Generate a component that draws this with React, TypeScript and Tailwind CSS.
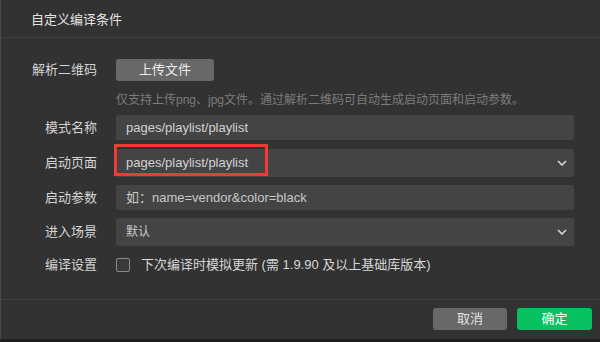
import React from "react";

const font = { fontFamily: '"Liberation Sans", "Noto Sans CJK SC", sans-serif' };

function Chevron() {
  return (
    <svg width="10" height="6" viewBox="0 0 10 6" className="shrink-0">
      <path d="M1 1 L5 5 L9 1" fill="none" stroke="#d8d8d8" strokeWidth="1.6" />
    </svg>
  );
}

function Label({ children }: { children: React.ReactNode }) {
  return <div className="w-[96px] shrink-0 text-right text-[13px] text-[#d4d4d4]">{children}</div>;
}

export default function App() {
  return (
    <div className="w-[600px] h-[342px] bg-[#1f1f1f] overflow-hidden" style={font}>
      <div className="relative w-[600px] h-[339px] bg-[#323232] border-l border-[#4a4a4a] flex flex-col">
        <div className="h-[38px] flex items-center pl-[30px] pt-[2px] text-[13px] text-[#e2e2e2] border-b border-[#3e3e3e]">
          自定义编译条件
        </div>
        <div className="flex-1 flex flex-col pr-[26px]">
          <div className="flex items-center mt-[21px] h-[22px]">
            <Label>解析二维码</Label>
            <button className="ml-[19px] w-[98px] h-[22px] rounded-[3px] bg-[#686868] text-[13px] text-[#ececec]">上传文件</button>
          </div>
          <div className="ml-[115px] mt-[12px] text-[12px] text-[#7c7c7c] leading-[14px]">
            仅支持上传png、jpg文件。通过解析二维码可自动生成启动页面和启动参数。
          </div>
          <div className="flex items-center mt-[8px]">
            <Label>模式名称</Label>
            <div className="ml-[19px] flex-1 h-[25px] rounded-[3px] bg-[#444444] flex items-center px-[10px] text-[13px] text-[#d2d2d2]">
              pages/playlist/playlist
            </div>
          </div>
          <div className="flex items-center mt-[9px]">
            <Label>启动页面</Label>
            <div className="ml-[19px] flex-1 h-[28px] rounded-[3px] bg-[#444444] flex items-center justify-between pl-[10px] pr-[7px] text-[13px] text-[#d2d2d2]">
              <span>pages/playlist/playlist</span>
              <Chevron />
            </div>
          </div>
          <div className="flex items-center mt-[8px]">
            <Label>启动参数</Label>
            <div className="ml-[19px] flex-1 h-[25px] rounded-[3px] bg-[#444444] flex items-center px-[10px] text-[13px] text-[#c8c8c8]">
              如：name=vendor&amp;color=black
            </div>
          </div>
          <div className="flex items-center mt-[8px]">
            <Label>进入场景</Label>
            <div className="ml-[19px] flex-1 h-[28px] rounded-[3px] bg-[#444444] flex items-center justify-between pl-[10px] pr-[7px] text-[12px] text-[#c8c8c8]">
              <span>默认</span>
              <Chevron />
            </div>
          </div>
          <div className="flex items-center mt-[9px]">
            <Label>编译设置</Label>
            <div className="ml-[19px] w-[14px] h-[14px] rounded-[2px] border border-[#8a8a8a] bg-[#3a3a3a]" />
            <div className="ml-[11px] text-[13px] text-[#d6d6d6]">下次编译时模拟更新 (需 1.9.90 及以上基础库版本)</div>
          </div>
        </div>
        <div className="h-[40px] border-t border-[#3e3e3e] flex items-center justify-end gap-[10px] pr-[8px] pb-[2px]">
          <button className="w-[74px] h-[22px] rounded-[3px] bg-[#686868] text-[13px] text-[#e2e2e2]">取消</button>
          <button className="w-[75px] h-[22px] rounded-[3px] bg-[#07c160] text-[13px] text-white">确定</button>
        </div>
        <div className="absolute left-[113px] top-[144px] w-[154px] h-[32px] border-[3px] border-[#f03a34]" />
      </div>
    </div>
  );
}
